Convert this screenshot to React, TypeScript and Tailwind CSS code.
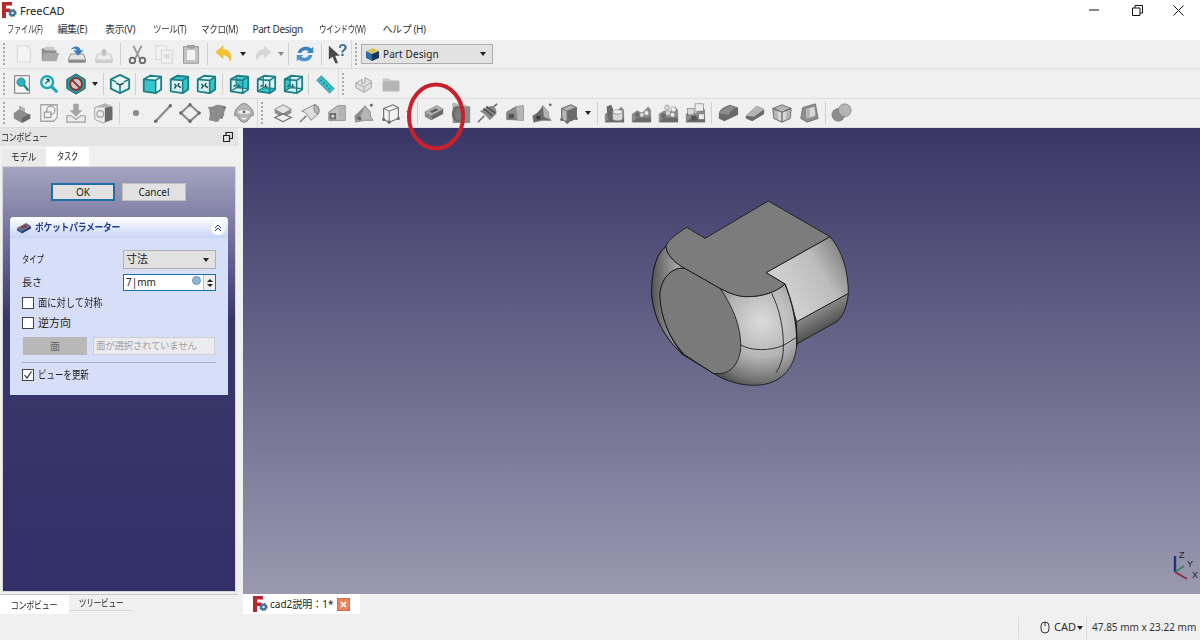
import React from "react";

type N = React.ReactNode;
const S = ({ children, s = 24 }: { children: N; s?: number }) => (
  <svg width={s} height={s} viewBox="0 0 24 24" className="block blur-[0.3px]">{children}</svg>
);

const g1 = "#8c8c8c", g2 = "#b4b4b4", g3 = "#6a6a6a", g4 = "#d8d8d8";

const TealCube = ({ face }: { face: "front" | "top" | "right" | "rear" | "bottom" | "left" }) => {
  const c = "#35c6ca", e = "#1d7f86", d = "#17484c";
  const back = face === "rear" || face === "bottom" || face === "left";
  return (
    <>
      <path d="M3 7 L10 3 L22 4 V18 L16 22 L3 20 Z" fill="#d6f2f2" />
      {face === "front" && <path d="M3 7 L16 8 V22 L3 20 Z" fill={c} />}
      {(face === "top" || face === "front") && <path d="M3 7 L10 3 L22 4 L16 8 Z" fill={face === "top" ? c : "#e4f7f7"} />}
      {(face === "right" || face === "top") && <path d="M16 8 L22 4 V18 L16 22 Z" fill={c} />}
      {face === "front" && <path d="M16 8 L22 4 V18 L16 22 Z" fill="#e4f7f7" />}
      {face === "rear" && <path d="M9 5 L22 4 V17 L9 16 Z" fill={c} />}
      {face === "bottom" && <path d="M3 20 L9 16 L22 17 L16 22 Z" fill={c} />}
      {face === "left" && <path d="M3 7 L9 5 V16 L3 20 Z" fill={c} />}
      {back && <path d="M9 4 V16 M3 20 L9 16 L22 17" stroke={e} strokeWidth="1.4" fill="none" />}
      <path d="M3 7 L10 3 L22 4 V18 L16 22 L3 20 Z" fill="none" stroke={e} strokeWidth="2" strokeLinejoin="round" />
      <path d="M3 7 L16 8 L22 4 M16 8 V22" fill="none" stroke={e} strokeWidth="1.7" />
      {face !== "front" && !back && <path d="M7 12 L9 14 L7 17 M12 11 L11 14 L14 16" stroke={d} strokeWidth="1.5" fill="none" />}
      {back && <path d="M6 15 L8 13 M12 12 L11 15 L14 15" stroke={d} strokeWidth="1.3" fill="none" />}
    </>
  );
};

const GearBlock = ({ v = 0 }: { v?: number }) => (
  <>
    <path d="M2 22 V13 L8 9 L13 12 L20 5 L23 9 V22 Z" fill={g1} />
    <path d="M2 22 L8 17 H23 V22 Z" fill={g3} />
    {v === 0 && <><path d="M4 5 L9 3 L11 8 V17 L5 18 Z" fill={g3} /><ellipse cx="16" cy="11" rx="5.5" ry="2.5" fill="#efefef" stroke={g3} strokeWidth=".5" /><path d="M10.5 11 V19 C13 21 19 21 21.5 19 V11 C19 14 13 14 10.5 11 Z" fill={g4} stroke={g3} strokeWidth=".5" /></>}
    {v === 1 && <><circle cx="8" cy="14" r="2.6" fill={g3} /><circle cx="13" cy="14" r="2.6" fill={g4} stroke={g3} strokeWidth=".5" /><circle cx="18" cy="12" r="2.6" fill="#ededed" stroke={g3} strokeWidth=".5" /></>}
    {v === 2 && <><circle cx="7" cy="15" r="2.6" fill={g3} /><circle cx="12" cy="12" r="2.8" fill={g4} stroke={g3} strokeWidth=".5" /><circle cx="18" cy="8" r="2.8" fill="#ededed" stroke={g3} strokeWidth=".5" /><circle cx="17" cy="14" r="2.6" fill="#ededed" stroke={g3} strokeWidth=".5" /><circle cx="11" cy="6" r="2.6" fill={g4} stroke={g3} strokeWidth=".5" /></>}
    {v === 3 && <><rect x="12" y="2" width="9" height="8" fill="#ededed" stroke={g3} strokeWidth=".6" /><rect x="4" y="7" width="7" height="7" fill={g4} stroke={g3} strokeWidth=".6" /><rect x="16" y="13" width="6" height="6" fill="#ededed" stroke={g3} strokeWidth=".6" /><rect x="8" y="15" width="6" height="5" fill="#555" /></>}
  </>
);

const icons: Record<string, N> = {
  new: <path d="M6 3 H16 L20 7 V21 H6 Z" fill="#f4f4f4" stroke="#dadada" strokeWidth="1.2" />,
  open: <><path d="M3 6 H10 L12 8 H19 V19 H3 Z" fill={g1} /><path d="M6 4 H17 V8 H6Z" fill="#c8c8c8" /><path d="M5 11 H22 L19 20 H3 Z" fill="#a8a8a8" /></>,
  save: <><path d="M5 12 L3 17 V21 H21 V17 L19 12 Z" fill="#e4e4e4" stroke="#8a8a8a" /><rect x="3" y="18" width="18" height="3" fill="#8c8c8c" /><path d="M5 7 C9 2 15 3 16 8 H19 L13 14 L8 8 H12 C11 6 8 6 5 7 Z" fill="#3a7cbc" /></>,
  saveas: <><path d="M5 12 L3 17 V21 H21 V17 L19 12 Z" fill="#ececec" stroke="#c4c4c4" /><rect x="3" y="18" width="18" height="3" fill="#cfcfcf" /><path d="M12 6 L16 10 H14 V14 H10 V10 H8 Z" fill="#c0c0c0" /></>,
  cut: <><path d="M8 3 L15 17 M17 3 L10 17" stroke="#9a9a9a" strokeWidth="2" /><circle cx="7" cy="19" r="3" fill="none" stroke={g3} strokeWidth="2" /><circle cx="18" cy="19" r="3" fill="none" stroke={g3} strokeWidth="2" /></>,
  copy: <><rect x="3" y="3" width="12" height="15" fill="#f2f2f2" stroke="#d8d8d8" /><rect x="9" y="8" width="12" height="14" fill="#f0f0f0" stroke="#d4d4d4" /><rect x="12" y="12" width="6" height="5" fill="#dcdcdc" /></>,
  paste: <><rect x="4" y="4" width="16" height="18" fill="#c8c8c8" stroke="#8a8a8a" /><rect x="7" y="7" width="10" height="12" fill="#f4f4f4" stroke="#aaa" strokeWidth=".6" /><rect x="8" y="2" width="8" height="4" fill="#a0a0a0" /></>,
  undo: <path d="M3 10 L11 3 V7 C18 7 21 12 19 20 C17 15 15 13 11 13 V17 Z" fill="#f2c530" stroke="#d8b040" strokeWidth=".5" />,
  redo: <path d="M21 10 L13 3 V7 C6 7 3 12 5 20 C7 15 9 13 13 13 V17 Z" fill="#d6d6d6" />,
  refresh: <><path d="M4 11 C5 4 14 2 19 6 L21 4 V11 H14 L16 9 C13 7 9 8 8 11 Z" fill="#3a84c4" /><path d="M20 13 C19 20 10 22 5 18 L3 20 V13 H10 L8 15 C11 17 15 16 16 13 Z" fill="#4c94d0" /></>,
  help: <><path d="M2 3 L14 14 L9 14 L12 22 L9 22 L6 15 L2 18 Z" fill="#4a4a4a" /><text x="12" y="14" fontSize="17" fontWeight="700" fontFamily="Liberation Sans" fill="#3c6c98">?</text></>,
  fitall: <><rect x="4" y="3" width="16" height="19" fill="#f6f6f6" stroke={g3} /><circle cx="11" cy="10" r="4.5" fill="#2cb4c0" stroke="#168a94" /><path d="M14 13 L19 19" stroke="#168a94" strokeWidth="2.6" /></>,
  fitsel: <><circle cx="10" cy="10" r="6.5" fill="#d8f4f4" stroke="#20a8b4" strokeWidth="2.6" /><path d="M14.5 14.5 L21 21" stroke="#20a8b4" strokeWidth="3.4" /><path d="M8 12 L12 7 M9 7 H12 V10" stroke="#17484c" strokeWidth="1.2" fill="none" /></>,
  style: <><path d="M12 1 L22 7 V17 L12 23 L2 17 V7 Z" fill="#2b9aa0" stroke="#17484c" /><circle cx="12" cy="12" r="6.5" fill="#d0c8c8" stroke="#8c2a2a" strokeWidth="2" /><path d="M7.5 7.5 L16.5 16.5" stroke="#8c2a2a" strokeWidth="2" /></>,
  iso: <><path d="M12 2 L22 7 V17 L12 22 L2 17 V7 Z" fill="#e4f6f6" stroke="#1d7f86" strokeWidth="2" strokeLinejoin="round" /><path d="M2 7 L8 10 M22 7 L16 10 M12 22 V16" stroke="#1d7f86" strokeWidth="1.7" /><path d="M8 11 L12 13 L16 11 M12 13 V16" stroke="#17484c" strokeWidth="1.7" fill="none" /></>,
  front: <TealCube face="front" />, top: <TealCube face="top" />, right: <TealCube face="right" />,
  rear: <TealCube face="rear" />, bottom: <TealCube face="bottom" />, left: <TealCube face="left" />,
  ruler: <><path d="M3 8 L8 3 L22 17 L17 22 Z" fill="#38c0c8" stroke="#1c8088" strokeWidth=".8" /><path d="M7 9 L9 7 M10 12 L12 10 M13 15 L15 13 M16 18 L18 16" stroke="#126" strokeWidth=".8" /></>,
  part: <><path d="M3 11 L10 7 V12 L13 10 V5 L20 9 V16 L12 21 L3 16 Z" fill="#dedede" stroke="#9c9c9c" /><path d="M12 15 V21 M3 11 L12 15 L20 10" stroke="#a4a4a4" fill="none" /></>,
  group: <><path d="M3 6 H10 L12 8 H21 V20 H3 Z" fill="#c8c8c8" /><path d="M3 9 H21 V20 H3 Z" fill="#b6b6b6" /></>,
  body: <><path d="M3 12 L9 8 V4 L15 7 V11 L21 14 V18 L12 23 L3 18 Z" fill={g1} /><path d="M12 17 L21 13 V18 L12 23 Z" fill={g3} /><path d="M9 4 L15 7 L15 11 L9 8 Z" fill={g2} /></>,
  sketch: <><path d="M3 3 H21 V17 L17 21 H3 Z" fill="#f2f2f2" stroke="#a6a6a6" strokeWidth="1.4" /><circle cx="14" cy="9" r="4.5" fill="none" stroke="#9c9c9c" strokeWidth="1.4" /><rect x="7" y="11" width="7" height="6" fill="#f2f2f2" stroke="#9c9c9c" strokeWidth="1.4" /></>,
  attach: <><path d="M9 2 H15 V9 H19 L12 16 L5 9 H9 Z" fill="#a4a4a4" /><path d="M2 15 H7 L12 19 L17 15 H22 V22 H2 Z" fill="#ececec" stroke="#a0a0a0" strokeWidth="1.3" /></>,
  clone: <><path d="M3 6 L14 2 L22 5 V19 L12 23 L3 19 Z" fill="#ececec" stroke="#a0a0a0" /><path d="M14 6 L22 5 V19 L14 22 Z" fill={g3} /><path d="M3 6 L14 6 L22 5 L14 2 Z" fill={g2} /><circle cx="9" cy="13" r="3.6" fill="none" stroke="#a0a0a0" strokeWidth="1.3" /></>,
  point: <circle cx="12" cy="12" r="3.4" fill={g1} />,
  line: <><path d="M4 21 L20 4" stroke={g1} strokeWidth="2.4" /><circle cx="4" cy="21" r="1.9" fill={g3} /><circle cx="20" cy="4" r="1.9" fill={g3} /></>,
  plane: <><path d="M12 3 L22 12 L12 21 L2 12 Z" fill="#f0f0f0" stroke={g1} strokeWidth="2.4" /><circle cx="12" cy="3" r="1.8" fill={g3} /><circle cx="22" cy="12" r="1.8" fill={g3} /><circle cx="12" cy="21" r="1.8" fill={g3} /><circle cx="2" cy="12" r="1.8" fill={g3} /></>,
  shape: <><path d="M2 5 C7 7 10 2 14 3 C17 4 20 3 22 6 C21 9 19 11 20 15 L15 18 C15 21 11 23 9 21 L3 20 C5 15 4 9 2 5 Z" fill={g1} /><circle cx="20" cy="6" r="1.3" fill={g3} /><circle cx="17" cy="17" r="1.3" fill={g3} /></>,
  sub: <><path d="M7 4 C10 1 14 1 17 4 C20 6 23 11 22 15 L19 15 C18 19 15 22 12 22 C9 22 6 19 5 15 L2 15 C1 11 4 6 7 4 Z" fill={g2} stroke={g3} strokeWidth=".8" /><path d="M5 11 C8 8 16 8 19 11 C16 14 8 14 5 11 Z" fill="#f0f0f0" /><circle cx="12" cy="11" r="1.6" fill={g3} /><path d="M10 17 C11 19 13 19 14 17" stroke="#efefef" strokeWidth="1.6" fill="none" /></>,
  pad: <><path d="M3 8 L12 3 L21 8 L12 13 Z" fill="#e4e4e4" stroke={g3} strokeWidth=".8" /><path d="M3 8 L12 13 L21 8 V12 L12 17 L3 12 Z" fill={g1} /><path d="M3 17 L12 13 L21 17 L12 21.5 Z" fill="#eeeeee" stroke={g3} strokeWidth="1.2" /></>,
  revolve: <><path d="M1 22 L8 15" stroke={g3} strokeWidth="1.4" /><path d="M3 10 C5 9 12 5 17 3 C21 3 23 9 21 13 L13 20 C10 14 7 11 3 10 Z" fill="#dedede" stroke={g3} strokeWidth=".8" /><path d="M17 3 C21 3 23 9 21 13 C17 13 15 7 17 3 Z" fill={g2} stroke={g3} strokeWidth=".7" /></>,
  loft: <><path d="M3 11 L13 4 H21 V20 H3 Z" fill="#c0c0c0" stroke={g3} strokeWidth=".8" /><path d="M13 4 L21 4 V20 L15 20 Z" fill={g2} /><path d="M4 12 H11 V19 H4 Z" fill={g3} /><rect x="6" y="14" width="3" height="3" fill={g4} /></>,
  sweep: <><path d="M2 15 C7 13 11 8 13 4 L19 11 C18 14 20 18 22 20 L12 20 L3 22 Z" fill={g2} stroke={g3} strokeWidth=".7" /><path d="M13 4 C11 8 11 12 8 15 L3 21 L2 15 Z" fill={g1} /><circle cx="20" cy="3.5" r="1.6" fill={g3} /><rect x="5" y="16" width="4" height="4" fill={g3} /></>,
  addprim: <><path d="M4 7 L14 3 L20 6 V18 L10 22 L4 19 Z" fill="#f2f2f2" stroke={g3} strokeWidth="1.2" /><path d="M4 7 L10 10 L20 6 M10 10 V22" stroke={g3} fill="none" /><circle cx="4" cy="19" r="1.7" fill={g3} /><circle cx="20" cy="18" r="1.7" fill={g3} /><circle cx="10" cy="22" r="1.7" fill={g3} /></>,
  pocket: <><path d="M2 11 L15 4 L22 8 L9 15 Z" fill={g2} stroke={g3} strokeWidth=".7" /><path d="M7 10.5 L14 7 L17 8.5 L10 12 Z" fill="#5a5a5a" /><path d="M2 11 L9 15 V20 L2 16 Z" fill={g1} /><path d="M9 15 L22 8 V13 L9 20 Z" fill={g3} /></>,
  hole: <><path d="M3 1 L22 5 V23 H3 Z" fill={g1} /><path d="M3 1 L22 5 H3 Z" fill={g2} /><ellipse cx="9" cy="13" rx="7" ry="8.5" fill={g3} /><ellipse cx="10" cy="13" rx="5" ry="7" fill="#7c7c7c" /></>,
  groove: <><path d="M1 22 L8 15 M16 7 L22 2" stroke={g3} strokeWidth="1.6" /><path d="M3 10 C5 9 12 5 16 4 C20 5 22 9 21 13 L14 20 C10 15 7 12 3 10 Z" fill={g1} /><path d="M7 7 L17 15 M10 5 L20 12" stroke="#555" strokeWidth="2" /></>,
  subloft: <><path d="M3 11 L13 5 L21 4 V20 L3 19 Z" fill={g1} stroke={g3} strokeWidth=".8" /><path d="M5 13 H11 V18 H5 Z" fill="#555" /><path d="M13 5 L21 4 V20 H15 Z" fill={g2} /></>,
  subsweep: <><path d="M2 15 C7 13 11 8 13 4 L19 11 C18 14 20 18 22 20 L12 20 L3 22 Z" fill={g3} stroke={g3} strokeWidth=".7" /><path d="M13 4 L19 11 C18 14 20 18 22 20 L14 16 Z" fill={g2} /><circle cx="21" cy="3" r="1.5" fill={g3} /><rect x="6" y="15" width="4" height="4" fill="#3a3a3a" /></>,
  subprim: <><path d="M4 7 L14 3 L20 6 V18 L10 22 L4 19 Z" fill={g2} stroke={g3} strokeWidth="1.2" /><path d="M10 10 L20 6 V18 L10 22 Z" fill={g3} /><path d="M4 7 L10 10 L20 6 M10 10 V22" stroke={g3} fill="none" /><circle cx="4" cy="19" r="1.7" fill={g3} /><circle cx="20" cy="18" r="1.7" fill={g3} /><circle cx="10" cy="22" r="1.7" fill={g3} /></>,
  gb0: <GearBlock v={0} />, gb1: <GearBlock v={1} />, gb2: <GearBlock v={2} />, gb3: <GearBlock v={3} />,
  fillet: <><path d="M2 12 C4 6 10 5 14 3 L23 6 V14 L8 21 L2 18 Z" fill={g3} /><path d="M2 12 C4 8 10 7 14 4 L23 6 C19 6 15 9 13 14 L5 13 Z" fill={g1} /></>,
  chamfer: <><path d="M2 15 L14 4 L22 8 V13 L9 21 L2 18 Z" fill={g3} /><path d="M2 15 L14 4 L22 8 L11 16 Z" fill={g2} /></>,
  draft: <><path d="M2 7 L12 3 L22 7 L21 18 L12 22 L3 18 Z" fill={g2} stroke={g3} /><path d="M7 9 H17 L16 19 L12 21 L8 19 Z" fill={g4} /><path d="M2 7 L12 11 L22 7 M12 11 V22" stroke={g3} strokeWidth="1.4" fill="none" /></>,
  thick: <><path d="M5 6 L19 2 L22 18 L10 22 L3 18 Z" fill={g1} stroke={g3} strokeWidth=".8" /><path d="M9 8 L18 5 L19 15 L9 18 Z" fill={g4} /><path d="M9 8 V18 L13 16 V8Z" fill={g2} /></>,
  bool: <><circle cx="8" cy="14" r="7" fill={g1} stroke={g3} strokeWidth=".6" /><circle cx="15" cy="9" r="7" fill={g2} stroke={g3} strokeWidth=".6" /></>,
};

const Ic = ({ n }: { n: string }) => (
  <div className="w-[27px] h-[24px] flex items-center justify-center shrink-0"><S s={22}>{icons[n]}</S></div>
);
const Dd = ({ w, light }: { w: string; light?: boolean }) => (
  <div className={`${w} flex items-center justify-center shrink-0`}>
    <div className={`w-0 h-0 border-x-[3.5px] border-x-transparent border-t-[4px] ${light ? "border-t-[#8a8a8a]" : "border-t-[#222]"}`} />
  </div>
);
const Sep = ({ w = "w-[6px]" }: { w?: string }) => (
  <div className={`${w} flex justify-center shrink-0`}><div className="w-px h-[22px] bg-[#d0d0d0]" /></div>
);
const Grip = ({ w }: { w: string }) => (
  <div className={`${w} h-full flex items-center shrink-0`}>
    <div className="h-[22px] w-0 ml-[3px] border-l-2 border-dotted border-l-[#a8a8a8]" />
  </div>
);
const Split = ({ w }: { w: string }) => (
  <div className={`${w} h-full flex items-center shrink-0`}>
    <div className="w-px h-full bg-[#d8d8d8] mr-[3px]" />
    <div className="h-[22px] w-0 border-l-2 border-dotted border-l-[#a8a8a8]" />
  </div>
);
const Row = ({ h, children }: { h: string; children: N }) => (
  <div className={`${h} flex items-center border-b border-b-[#dedede] shrink-0`}>{children}</div>
);
const Sq = ({ k, children }: { k: string; children: N }) => (
  <span className={`inline-block whitespace-nowrap ${k}`}>{children}</span>
);

const Logo = () => (
  <svg width="15" height="16" viewBox="0 0 15 16" className="block">
    <path d="M0 0 H10 V3.5 H4 V6.5 H8 V10 H4 V16 H0 Z" fill="#b8272c" />
    <circle cx="10.5" cy="11" r="3.3" fill="#3f6f98" stroke="#3f6f98" strokeWidth="1.8" strokeDasharray="1.4 1.2" />
    <circle cx="10.5" cy="11" r="1.3" fill="#e8eef4" />
  </svg>
);

const Check = ({ on, children }: { on?: boolean; children: N }) => (
  <div className="flex items-center gap-[4px] h-[12px] text-[11px] text-[#222]">
    <div className="w-[12px] h-[12px] bg-white border border-[#444] flex items-center justify-center">
      {on && <svg width="10" height="10" viewBox="0 0 10 10"><path d="M1.5 5 L4 8 L8.5 1.5" stroke="#222" strokeWidth="1.1" fill="none" /></svg>}
    </div>
    {children}
  </div>
);

const Model = () => (
  <svg width="240" height="210" viewBox="0 0 720 630" className="absolute left-[387px] top-[62px]">
    <defs>
      <radialGradient id="bodyG" gradientUnits="userSpaceOnUse" cx="395" cy="395" r="215">
        <stop offset="0" stopColor="#dcdcdc" />
        <stop offset=".5" stopColor="#b4b4b4" />
        <stop offset=".82" stopColor="#747474" />
        <stop offset="1" stopColor="#404040" />
      </radialGradient>
      <linearGradient id="leftG" x1="0" y1="0" x2="1" y2="0">
        <stop offset="0" stopColor="#555555" />
        <stop offset="1" stopColor="#bdbdbd" />
      </linearGradient>
      <linearGradient id="upG" gradientUnits="userSpaceOnUse" x1="470" y1="300" x2="650" y2="190">
        <stop offset="0" stopColor="#cfcfcf" />
        <stop offset=".55" stopColor="#bcbcbc" />
        <stop offset="1" stopColor="#7e7e7e" />
      </linearGradient>
      <linearGradient id="lowG" gradientUnits="userSpaceOnUse" x1="565" y1="350" x2="610" y2="430">
        <stop offset="0" stopColor="#909090" />
        <stop offset="1" stopColor="#3a3a3a" />
      </linearGradient>
    </defs>
    <path d="M500 395 L655 310 C652 345 640 380 620 395 L500 462 Z" fill="url(#lowG)" stroke="#111" strokeWidth="2.4" strokeLinejoin="round" />
    <path d="M600 140 C635 180 655 240 655 310 L500 395 L465 282 L408 248 Z" fill="url(#upG)" stroke="#111" strokeWidth="2.4" strokeLinejoin="round" />
    <path d="M108 170 C80 190 65 240 65 310 C70 380 100 440 160 495 L250 550 C290 575 340 590 390 585 C440 580 490 550 500 470 C505 400 485 330 465 282 C440 305 400 320 350 320 C320 320 290 305 270 295 L170 238 C135 220 110 195 108 170 Z" fill="url(#bodyG)" stroke="#111" strokeWidth="2.4" strokeLinejoin="round" />
    <path d="M108 170 C80 190 65 240 65 310 C70 380 100 440 160 495 C120 450 90 380 90 310 C95 260 130 230 165 235 C135 220 110 195 108 170 Z" fill="url(#leftG)" stroke="#111" strokeWidth="2.4" strokeLinejoin="round" />
    <path d="M165 235 C130 230 95 260 90 310 C90 380 120 450 165 495 L250 550 C290 555 320 540 332 480 C335 420 315 360 270 295 Z" fill="#7a7a7a" stroke="#111" strokeWidth="2.4" strokeLinejoin="round" />
    <path d="M170 112 L225 145 L415 33 L600 140 L408 248 L465 282 C440 305 400 320 350 320 C320 320 290 305 270 295 L170 238 C135 220 110 195 108 170 C110 155 130 138 170 112 Z" fill="#7c7c7c" stroke="#111" strokeWidth="2.4" strokeLinejoin="round" />
    <path d="M333 465 C360 482 420 485 462 465 L500 442 M425 310 C450 360 462 420 460 480 C458 510 450 530 438 548 M465 282 C485 335 502 400 500 470" stroke="#111" strokeWidth="2.4" fill="none" />
  </svg>
);

export default function App() {
  return (
    <div className="relative w-[1200px] h-[640px] overflow-hidden flex flex-col bg-[#f0f0f0] text-[#222] font-['Noto_Sans','Noto_Sans_CJK_JP',sans-serif]">
      <div className="h-[20px] bg-white flex items-center pl-[2px] shrink-0">
        <Logo />
        <span className="ml-[3px] text-[11px] leading-none">FreeCAD</span>
        <div className="ml-auto flex items-center">
          <svg width="10" height="2" className="mr-[33px]"><path d="M0 1 H10" stroke="#111" /></svg>
          <svg width="11" height="11" viewBox="0 0 11 11" className="mr-[30px]"><path d="M.5 3 H8 V10.5 H.5 Z M3 3 V.5 H10.5 V8 H8" stroke="#111" fill="none" /></svg>
          <svg width="11" height="11" viewBox="0 0 11 11" className="mr-[16px]"><path d="M.5 .5 L10.5 10.5 M10.5 .5 L.5 10.5" stroke="#111" /></svg>
        </div>
      </div>
      <div className="h-[20px] pb-[2px] bg-white flex items-center pl-[7px] gap-[14.5px] text-[10px] tracking-[-0.4px] leading-none shrink-0 text-[#333]">
        <div className="w-[36px]"><Sq k="origin-left scale-x-[.73]">ファイル(F)</Sq></div>
        <div className="w-[33px]"><Sq k="origin-left">編集(E)</Sq></div>
        <div className="w-[33px]"><Sq k="origin-left">表示(V)</Sq></div>
        <div className="w-[34px]"><Sq k="origin-left scale-x-[.85]">ツール(T)</Sq></div>
        <div className="w-[37px]"><Sq k="origin-left scale-x-[.86]">マクロ(M)</Sq></div>
        <div className="w-[52px]"><Sq k="origin-left">Part Design</Sq></div>
        <div className="w-[49px]"><Sq k="origin-left scale-x-[.75]">ウインドウ(W)</Sq></div>
        <div className="w-[42px]"><Sq k="origin-left">ヘルプ (H)</Sq></div>
      </div>

      <Row h="h-[29px]">
        <Grip w="w-[9px]" />
        <Ic n="new" /><Ic n="open" /><Ic n="save" /><Ic n="saveas" /><Sep />
        <Ic n="cut" /><Ic n="copy" /><Ic n="paste" /><Sep />
        <Ic n="undo" /><Dd w="w-[12px]" /><Ic n="redo" /><Dd w="w-[9px]" light /><Sep />
        <Ic n="refresh" /><Sep /><Ic n="help" />
        <Split w="w-[10px]" />
        <div className="w-[132px] h-[20px] bg-[#e2e2e2] border border-[#adadad] flex items-center pl-[3px] pr-[6px] text-[10px] tracking-[0.1px]">
          <svg width="15" height="15" viewBox="0 0 15 15" className="mr-[3px] shrink-0">
            <path d="M1 4 L8 1 L14 4 L7 7 Z" fill="#d8c25c" /><path d="M1 4 L7 7 V14 L1 11 Z" fill="#2b6fa8" /><path d="M7 7 L14 4 V11 L7 14 Z" fill="#17375e" />
          </svg>
          <span>Part Design</span>
          <div className="ml-auto w-0 h-0 border-x-[3.5px] border-x-transparent border-t-[4px] border-t-[#222]" />
        </div>
      </Row>
      <Row h="h-[30px]">
        <Grip w="w-[8px]" />
        <Ic n="fitall" /><Ic n="fitsel" /><Ic n="style" /><Dd w="w-[11px]" /><Sep />
        <Ic n="iso" /><Sep w="w-[5px]" />
        <Ic n="front" /><Ic n="top" /><Ic n="right" /><Sep />
        <Ic n="rear" /><Ic n="bottom" /><Ic n="left" /><Sep w="w-[5px]" />
        <Ic n="ruler" />
        <Split w="w-[12px]" />
        <Ic n="part" /><Ic n="group" />
      </Row>
      <Row h="h-[29px]">
        <Grip w="w-[8px]" />
        <Ic n="body" /><Ic n="sketch" /><Ic n="attach" /><Ic n="clone" /><Sep />
        <Ic n="point" /><Ic n="line" /><Ic n="plane" /><Ic n="shape" /><Ic n="sub" />
        <Split w="w-[12px]" />
        <Ic n="pad" /><Ic n="revolve" /><Ic n="loft" /><Ic n="sweep" /><Ic n="addprim" /><Dd w="w-[10px]" light /><Sep />
        <Ic n="pocket" /><Ic n="hole" /><Ic n="groove" /><Ic n="subloft" /><Ic n="subsweep" /><Ic n="subprim" /><Dd w="w-[12px]" /><Sep />
        <Ic n="gb0" /><Ic n="gb1" /><Ic n="gb2" /><Ic n="gb3" /><Sep />
        <Ic n="fillet" /><Ic n="chamfer" /><Ic n="draft" /><Ic n="thick" /><Sep />
        <Ic n="bool" />
      </Row>

      <div className="flex-1 flex min-h-0">
        <div className="w-[238px] flex flex-col shrink-0 mr-[5px]">
          <div className="h-[18px] bg-[#e4e4e4] flex items-center pl-px pr-[5px] text-[10px] tracking-[-0.4px] shrink-0">
            <Sq k="origin-left scale-x-[.8]">コンボビュー</Sq>
            <svg width="10" height="10" viewBox="0 0 10 10" className="ml-auto"><path d="M.5 3.5 H6.5 V9.5 H.5 Z M3 3 V.5 H9.5 V6.5 H7" stroke="#222" strokeWidth="1.2" fill="none" /></svg>
          </div>
          <div className="h-[20px] flex items-end pl-[2px] text-[10px] tracking-[-0.3px] shrink-0">
            <div className="w-[44px] h-[17px] flex items-center justify-center bg-[#eaeaea]"><Sq k="scale-x-[.86]">モデル</Sq></div>
            <div className="w-[43px] h-[19px] flex items-center justify-center bg-white"><Sq k="scale-x-[.73]">タスク</Sq></div>
          </div>
          <div className="flex-1 mx-[2px] border border-[#d6d6d6] bg-[linear-gradient(180deg,#a4a4c0_0%,#5c5a8c_24%,#3a3768_36%,#33306a_100%)] pt-[16px] flex flex-col min-h-0">
            <div className="flex justify-center gap-[7px] -ml-[1px] text-[10px] shrink-0">
              <div className="w-[64px] h-[18px] bg-[#e1e1e1] border-2 border-[#1d6fa5] flex items-center justify-center">OK</div>
              <div className="w-[64px] h-[18px] bg-[#e1e1e1] border border-[#c0c0c0] flex items-center justify-center">Cancel</div>
            </div>
            <div className="mt-[16px] ml-[7px] w-[218px] h-[178px] shrink-0 flex flex-col rounded-t-[4px] bg-[#d6dff7]">
              <div className="h-[21px] rounded-t-[4px] bg-[linear-gradient(180deg,#ffffff,#c8d4f6)] flex items-center pl-[6px] pr-[3px] shrink-0">
                <svg width="16" height="12" viewBox="0 0 16 12" className="mr-[3px]">
                  <path d="M1 6 L10 1 L15 4 L6 9 Z" fill="#6a6a7a" /><path d="M5 5.5 L9.5 3 L11.5 4 L7 6.5 Z" fill="#a02c34" /><path d="M1 6 L6 9 V11.5 L1 8.5 Z" fill="#2b5c9c" /><path d="M6 9 L15 4 V6.5 L6 11.5 Z" fill="#1c3c78" />
                </svg>
                <span className="text-[10px] font-bold text-[#1f3a93] tracking-[-0.3px]"><Sq k="origin-left scale-x-[.88]">ポケットパラメーター</Sq></span>
                <div className="ml-auto w-[14px] h-[14px] rounded-full bg-white flex items-center justify-center">
                  <svg width="8" height="8" viewBox="0 0 8 8"><path d="M1 4 L4 1 L7 4 M1 7 L4 4 L7 7" stroke="#1f3a93" fill="none" /></svg>
                </div>
              </div>
              <div className="flex-1 flex flex-col pl-[12px] pr-[12px] text-[10px] text-[#222]">
                <div className="mt-[12px] h-[19px] flex items-center justify-between">
                  <Sq k="origin-left scale-x-[.73]">タイプ</Sq>
                  <div className="w-[93px] h-[19px] bg-[#e1e1e1] border border-[#b0b0b0] flex items-center pl-[2px] pr-[6px] text-[11px]">
                    <span>寸法</span>
                    <div className="ml-auto w-0 h-0 border-x-[3.5px] border-x-transparent border-t-[4px] border-t-[#222]" />
                  </div>
                </div>
                <div className="mt-[5px] h-[17px] flex items-center justify-between">
                  <span>長さ</span>
                  <div className="w-[93px] h-[17px] bg-white border border-[#1d6fa5] flex items-center pl-[2px] text-[10px]">
                    <span>7|mm</span>
                    <div className="ml-auto mr-[2px] w-[9px] h-[9px] rounded-full bg-[#8fb4d8] border border-[#6a94bc] mb-[4px]" />
                    <div className="w-[12px] h-full border-l border-[#c0c0c0] flex flex-col items-center justify-center gap-[2px] bg-[#eeeeee]">
                      <div className="w-0 h-0 border-x-[3px] border-x-transparent border-b-[3px] border-b-[#222]" />
                      <div className="w-0 h-0 border-x-[3px] border-x-transparent border-t-[3px] border-t-[#222]" />
                    </div>
                  </div>
                </div>
                <div className="mt-[6px]"><Check><Sq k="origin-left scale-x-[.84]">面に対して対称</Sq></Check></div>
                <div className="mt-[8px]"><Check><Sq k="origin-left">逆方向</Sq></Check></div>
                <div className="mt-[8px] h-[18px] flex gap-[6px] pl-px">
                  <div className="w-[64px] h-[18px] bg-[#b8b8b8] flex items-center justify-center text-[#666]">面</div>
                  <div className="w-[122px] h-[18px] bg-[#ececf0] border border-[#d0d0d0] flex items-center pl-[2px] text-[#a0a0a0] text-[9.5px] tracking-[-0.3px] whitespace-nowrap">面が選択されていません</div>
                </div>
                <div className="mt-[7px] h-px bg-[#a9b0c0]" />
                <div className="mt-[6px]"><Check on><Sq k="origin-left scale-x-[.77]">ビューを更新</Sq></Check></div>
              </div>
            </div>
          </div>
          <div className="h-[21px] shrink-0 flex border-t border-t-[#c8c8c8] text-[10px] tracking-[-0.3px] mt-[2px]">
            <div className="w-[69px] h-[19px] bg-white flex items-center justify-center pt-[2px]"><Sq k="scale-x-[.8]">コンボビュー</Sq></div>
            <div className="w-[64px] h-[16px] flex items-center justify-center border-b border-b-[#d8d8d8] pt-[2px]"><Sq k="scale-x-[.77]">ツリービュー</Sq></div>
          </div>
        </div>

        <div className="flex-1 flex flex-col min-w-0">
          <div className="relative flex-1 bg-[linear-gradient(180deg,#393666,#9a99b0)]">
            <Model />
            <svg width="30" height="40" viewBox="0 0 30 40" className="absolute right-0 top-[417px]">
              <path d="M5 27 V11" stroke="#25307c" strokeWidth="2.4" />
              <path d="M5 27 L14 21" stroke="#3c8048" strokeWidth="1.6" />
              <path d="M5 27 L17 34" stroke="#8c2a3a" strokeWidth="1.8" />
              <text x="9" y="13" fontSize="9" fontFamily="Liberation Sans" fill="#222">Z</text>
              <text x="17" y="22" fontSize="9" fontFamily="Liberation Sans" fill="#222">Y</text>
              <text x="22" y="33" fontSize="9" fontFamily="Liberation Sans" fill="#222">X</text>
            </svg>
          </div>
          <div className="h-[21px] shrink-0 flex">
            <div className="w-[117px] h-[20px] bg-white flex items-center pl-[10px] text-[10px] whitespace-nowrap">
              <Logo />
              <span className="ml-[2px]">cad2説明：1*</span>
              <div className="ml-[3px] w-[13px] h-[13px] bg-[#e8875f] border border-[#d46a40] flex items-center justify-center">
                <svg width="7" height="7" viewBox="0 0 7 7"><path d="M1 1 L6 6 M6 1 L1 6" stroke="#fff" strokeWidth="1.6" /></svg>
              </div>
            </div>
          </div>
        </div>
      </div>

      <div className="h-[25px] shrink-0 flex items-center text-[10px] text-[#333]">
        <div className="ml-[1018px] w-px h-[22px] bg-[#d8d8d8]" />
        <svg width="10" height="13" viewBox="0 0 10 13" className="ml-[21px]"><rect x="1" y="1" width="8" height="11" rx="4" fill="none" stroke="#333" /><path d="M5 1 V5" stroke="#333" /></svg>
        <span className="ml-[4px] text-[11px]">CAD</span>
        <div className="ml-px w-0 h-0 border-x-[3.5px] border-x-transparent border-t-[4px] border-t-[#222]" />
        <div className="ml-[3px] w-px h-[22px] bg-[#d8d8d8]" />
        <span className="ml-[5px] whitespace-nowrap">47.85 mm x 23.22 mm</span>
      </div>

      <svg width="60" height="69" viewBox="0 0 60 69" className="absolute left-[406px] top-[82px]">
        <ellipse cx="30" cy="34.5" rx="27" ry="32" fill="none" stroke="#c8202c" strokeWidth="4" />
      </svg>
    </div>
  );
}
